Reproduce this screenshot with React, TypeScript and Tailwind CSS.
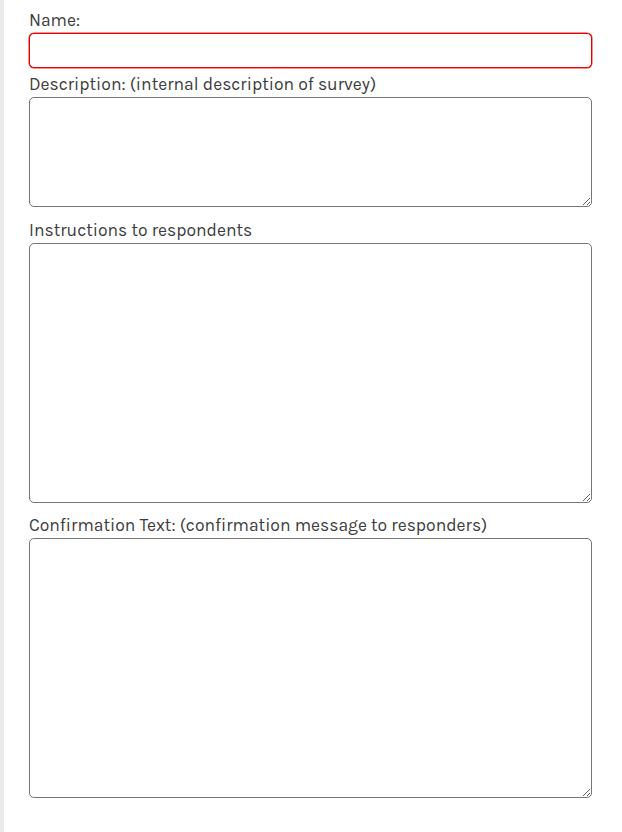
export default function App() {
  return (
    <div className="flex min-h-[832px] bg-white font-['Karla','Lato',sans-serif] text-[#3c3c3c]">
      <div className="w-[4px] shrink-0 bg-[#ebebeb]" />
      <form className="flex w-[588px] flex-col pl-[25px] pt-[8px]">
        <label className="text-[17.5px] font-normal leading-[24px]">Name:</label>
        <input
          type="text"
          className="mt-px h-[35px] w-full rounded-[5px] border border-[#e60000] bg-white shadow-[0_0_0_0.5px_#ff2020]"
        />
        <label className="mt-[4px] text-[17.5px] font-normal leading-[24px]">
          Description: (internal description of survey)
        </label>
        <textarea className="mt-px block h-[110px] w-full rounded-[5px] border border-[#767676] bg-white" />
        <label className="mt-[11px] text-[17.5px] font-normal leading-[24px]">Instructions to respondents</label>
        <textarea className="mt-px block h-[260px] w-full rounded-[5px] border border-[#767676] bg-white" />
        <label className="mt-[10px] text-[17.5px] font-normal leading-[24px]">
          Confirmation Text: (confirmation message to responders)
        </label>
        <textarea className="mt-px block h-[260px] w-full rounded-[5px] border border-[#767676] bg-white" />
      </form>
    </div>
  );
}
